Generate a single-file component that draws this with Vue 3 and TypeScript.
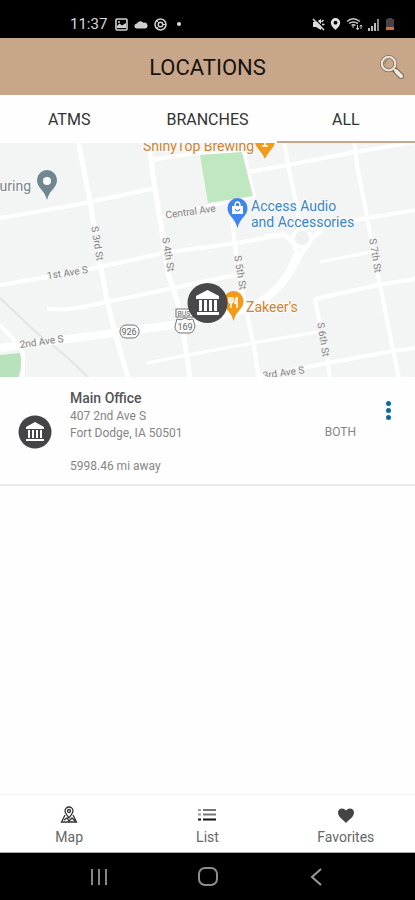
<script setup lang="ts">
import { ref } from 'vue'

interface Street {
  d: string
  width: number
}

interface StreetLabel {
  text: string
  x: number
  y: number
  angle: number
}

const tabs: string[] = ['ATMS', 'BRANCHES', 'ALL']
const activeTab = ref('ALL')

const streets: Street[] = [
  { d: 'M78 140L90 202L100 263L107 300L115 333L128 378', width: 5 },
  { d: 'M0 218C35 212 60 208 90 202L155 188', width: 4 },
  { d: 'M148 140L155 188L162 232L168 273L178 303L185 343L190 378', width: 5 },
  { d: 'M150 160L197 153L243 150', width: 4 },
  { d: 'M243 150L254 197', width: 4 },
  { d: 'M248 172L288 165L355 152L415 142', width: 4 },
  { d: 'M284 140L288 165L295 198L301 230', width: 4 },
  { d: 'M354 140L357 165L367 217L378 275L387 320L399 378', width: 4 },
  { d: 'M304 229L367 218L415 210', width: 4 },
  { d: 'M160 217L208 206L254 197', width: 3 },
  { d: 'M230 205L235 245L242 290L253 342L259 378', width: 4 },
  { d: 'M0 285L47 277L100 267L163 253L237 243L270 237', width: 4 },
  { d: 'M47 309C75 311 90 305 107 302L173 288L240 274', width: 4 },
  { d: 'M147 363L188 355L253 343L317 332', width: 3 },
  { d: 'M320 262L371 252', width: 3 },
  { d: 'M330 378L328 363L320 325L315 299L378 285L415 279', width: 4 },
  { d: 'M260 376L328 363L393 351L415 348', width: 4 },
  { d: 'M0 325L17 343Q23 350 23 358V378', width: 4 },
]

const streetLabels: StreetLabel[] = [
  { text: 'S 3rd St', x: 94, y: 244, angle: 81 },
  { text: 'S 4th St', x: 165, y: 255, angle: 81 },
  { text: 'S 5th St', x: 237, y: 273, angle: 81 },
  { text: 'S 7th St', x: 372, y: 256, angle: 81 },
  { text: 'S 6th St', x: 320, y: 340, angle: 81 },
  { text: 'Central Ave', x: 191, y: 215, angle: -8 },
  { text: '1st Ave S', x: 68, y: 276, angle: -9 },
  { text: '2nd Ave S', x: 42, y: 345, angle: -8 },
  { text: '3rd Ave S', x: 284, y: 376, angle: -8 },
]
</script>

<template>
  <div class="screen">
    <div class="status">
      <div class="status-group">
        <span class="clock">11:37</span>
        <svg width="13" height="13" viewBox="0 0 13 13"><rect x="1" y="1" width="11" height="11" rx="1" fill="none" stroke="#d0d0d0" stroke-width="1.6" /><path d="M2 10V8l2.500-2.500L7 7.500 11 5v5z" fill="#d0d0d0" /><circle cx="4" cy="4" r="1" fill="#d0d0d0" /></svg>
        <svg width="14" height="13" viewBox="0 0 14 13"><path d="M3 10.500a2.500 2.500 0 0 1 0-5A3.700 3.700 0 0 1 9.500 4.800 3 3 0 0 1 11.500 10.500z" fill="#d0d0d0" /></svg>
        <svg width="13" height="13" viewBox="0 0 13 13" fill="none" stroke="#d0d0d0"><circle cx="6.500" cy="6.500" r="5.500" stroke-width="1.500" /><circle cx="6.500" cy="6.500" r="2.300" stroke-width="1.500" /><path d="M8.800 6.500h3M4.500 8.500l-2 2M4.500 4.500l-2-2" /></svg>
        <span class="dot"></span>
      </div>
      <div class="status-group right">
        <svg width="13" height="13" viewBox="0 0 13 13"><path d="M1 4h3l5-3v11L4 9H1z" fill="#ddd" /><path d="M2 0l11 11" stroke="#000" stroke-width="1.200" /><path d="M1 1l11 11M9.500 4l2-2M10 6.500h2.500" stroke="#ddd" stroke-width="1.500" /></svg>
        <svg width="11" height="14" viewBox="0 0 11 14"><path fill-rule="evenodd" d="M5.500 1A4.700 4.700 0 0 0 .8 5.700C.8 9 5.500 13 5.500 13s4.700-4 4.700-7.300A4.700 4.700 0 0 0 5.500 1zm0 2.800a1.900 1.900 0 1 1 0 3.800 1.900 1.900 0 0 1 0-3.800z" fill="#e2e2e2" /></svg>
        <svg width="17" height="14" viewBox="0 0 17 14" fill="none" stroke="#c8c8c8" stroke-width="1.500"><path d="M1 4.500Q7 -1 14 4.500M3 6.500q4-3 9 0M5.500 8.500q2-1.500 4 0" /><path d="M7 11V8M11.500 8v4.500M10 11l1.500 1.800L13 11M15 12V8M13.700 9.500L15 8l1.300 1.500" stroke-width="1" /></svg>
        <svg width="12" height="13" viewBox="0 0 12 13" fill="#bbb"><path d="M0 10h2v3H0zM3 8h2v5H3zM6 5h2v8H6z" /><path d="M9 1h2v12H9z" fill="#888" /></svg>
        <svg width="10" height="14" viewBox="0 0 10 14"><path d="M3 1h4v1h2v11H1V2h2z" fill="#484344" /><path d="M1 10h8v3H1z" fill="#d56d3c" /></svg>
      </div>
    </div>

    <header class="header">
      <h1>LOCATIONS</h1>
      <button class="search" type="button" aria-label="Search">
        <svg width="25" height="25" viewBox="0 0 26 26" fill="none" stroke-linecap="round">
          <circle cx="10" cy="10" r="7" stroke="#75685c" stroke-width="4" />
          <path d="M16 16l7 7" stroke="#75685c" stroke-width="6" />
          <circle cx="10" cy="10" r="7" stroke="#e9dccd" stroke-width="2.500" />
          <path d="M15 15l2 2" stroke="#e9dccd" stroke-width="2" />
          <path d="M18 18l5 5" stroke="#f3e9dd" stroke-width="4" />
          <path d="M6 10q0-3 3-4" stroke="#8a7a6b" stroke-width="1" />
        </svg>
      </button>
    </header>

    <nav class="tabs">
      <button v-for="tab in tabs" :key="tab" type="button" class="tab" :class="{ active: tab === activeTab }" @click="activeTab = tab">{{ tab }}</button>
    </nav>

    <svg class="map" viewBox="0 143 415 234" preserveAspectRatio="xMidYMid slice">
      <rect y="143" width="415" height="234" fill="#f3f4f4" />
      <path d="M0 298L37 333L67 357L88 377" fill="none" stroke="#e3e4e4" stroke-width="2" />
      <path d="M0 355L20 353Q23 366 18 378H0z" fill="#b8e2bb" />
      <g fill="none" stroke="#fff" stroke-linejoin="round">
        <path v-for="street in streets" :key="street.d" :d="street.d" :stroke-width="street.width" />
        <path d="M0 348L113 333L173 325L235 313Q263 305 280 285Q292 271 297 255" stroke-width="8" />
        <path d="M264 237L284 235Q298 242 297 260M309 244Q300 252 297 264M310 240L322 230" stroke-width="5" />
        <circle cx="302" cy="238" r="9" stroke-width="4" />
      </g>
      <circle cx="302" cy="238" r="7" fill="#eef0f1" />
      <path d="M200 155L242 152L253 196L208 203z" fill="#bfe7c0" />
      <g class="street-names">
        <text v-for="label in streetLabels" :key="label.text" :x="label.x" :y="label.y" :transform="`rotate(${label.angle} ${label.x} ${label.y})`">{{ label.text }}</text>
      </g>

      <g class="shields">
        <rect x="120" y="325" width="19" height="13" rx="6" />
        <text x="129" y="335">926</text>
        <rect x="176" y="309" width="17" height="8" />
        <text x="184" y="316" class="small">BUS</text>
        <path d="M177 319q4 2 8-1 4 3 8 1l2 7q-1 6-5 7h-10q-5-1-5-7z" />
        <text x="185" y="330">169</text>
      </g>

      <g class="places">
        <text x="31" y="191" text-anchor="end" fill="#78868d">uring</text>
        <text x="143" y="151" fill="#ce8432">ShinyTop Brewing</text>
        <text x="251" y="211" fill="#3986c7">Access Audio</text>
        <text x="251" y="227" fill="#3986c7">and Accessories</text>
        <text x="246" y="312" fill="#ce8432">Zakeer's</text>
      </g>

      <path d="M47 170a10 10 0 0 0-10 10c0 8 7 9 10 20 3-11 10-12 10-20a10 10 0 0 0-10-10z" fill="#708690" />
      <circle cx="47" cy="181" r="4" fill="#fff" />
      <path d="M255 140h20c1 7-6 10-10 19-4-9-11-12-10-19z" fill="#f39a18" />
      <path d="M262 146h6M265 141v5" stroke="#fff" stroke-width="1.500" />
      <path d="M237.500 198a10 10 0 0 0-10 10c0 8 7 9 10 20 3-11 10-12 10-20a10 10 0 0 0-10-10z" fill="#3f85ed" />
      <path d="M232 206h11v8h-11z" fill="#fff" />
      <path d="M235 206q0-4 2.500-4t2.500 4" fill="none" stroke="#fff" stroke-width="1.500" />
      <path d="M235 209q2.500 4 5 0" fill="none" stroke="#3f85ed" stroke-width="1.200" />
      <path d="M233.500 291a10 10 0 0 0-10 10c0 8 7 9 10 20 3-11 10-12 10-20a10 10 0 0 0-10-10z" fill="#f39a18" />
      <path d="M229 297v4q0 2 2 2t2-2v-4M231 297v11M237 297v11M237 297q-2 2-2 6h2" fill="none" stroke="#fff" stroke-width="1.500" />
      <circle cx="207.500" cy="303" r="20" fill="#48484a" />
      <path d="M196 299v-3l11.500-6 11.500 6v3zM199 300h3v11h-3zM204 300h3v11h-3zM209 300h3v11h-3zM214 300h3v11h-3zM197 312h22v3h-22z" fill="#fff" />
    </svg>

    <main class="list">
      <article class="location">
        <svg class="bank" width="34" height="34" viewBox="0 0 34 34">
          <circle cx="17" cy="17" r="16.500" fill="#444446" />
          <path d="M8 14v-2l9-5 9 5v2zM10 15h2v8h-2zM14 15h2v8h-2zM18 15h2v8h-2zM22 15h2v8h-2zM8 24h18v2H8z" fill="#fff" />
        </svg>
        <div class="details">
          <h2>Main Office</h2>
          <p>407 2nd Ave S</p>
          <p>Fort Dodge, IA 50501</p>
          <p class="distance">5998.46 mi away</p>
        </div>
        <span class="kind">BOTH</span>
        <button class="more" type="button" aria-label="More options"><i></i><i></i><i></i></button>
      </article>
    </main>

    <nav class="bottom">
      <button type="button">
        <svg width="18" height="18" viewBox="0 0 18 18" fill="none" stroke="#333" stroke-width="1.300"><path d="M9 12C7 9 5 7.500 5 5a4 4 0 0 1 8 0c0 2.500-2 4-4 7z" /><circle cx="9" cy="5" r="1.500" /><path d="M5 9L1.500 16h15L13 9M4 14l3-2 2 3 3-3 3 3" /></svg>
        <span>Map</span>
      </button>
      <button type="button">
        <svg width="18" height="18" viewBox="0 0 18 18"><path d="M0 4h3M0 8.500h3" stroke="#999" stroke-width="2" /><path d="M5 4h13M5 8.500h13" stroke="#777" stroke-width="1.800" /><path d="M0 13.500h3M5 13.500h13" stroke="#111" stroke-width="2" /></svg>
        <span>List</span>
      </button>
      <button type="button">
        <svg width="18" height="18" viewBox="0 0 18 18"><path d="M9 17C6 13.500 1 11 1 6.500 1 2 6.500 1 9 4.500 11.500 1 17 2 17 6.500 17 11 12 13.500 9 17z" fill="#444" /></svg>
        <span>Favorites</span>
      </button>
    </nav>

    <div class="system">
      <button type="button" aria-label="Recent apps"><svg width="18" height="18" viewBox="0 0 18 18" stroke="#858585" stroke-width="2"><path d="M2 1v16M9 1v16M16 1v16" /></svg></button>
      <button type="button" aria-label="Home"><svg width="20" height="20" viewBox="0 0 20 20" fill="none" stroke="#8e8e8e" stroke-width="2"><rect x="1" y="1" width="18" height="17" rx="6" /></svg></button>
      <button type="button" aria-label="Back"><svg width="18" height="18" viewBox="0 0 18 18" fill="none" stroke="#9a9a9a" stroke-width="2"><path d="M13 1L4 9l9 8" /></svg></button>
    </div>
  </div>
</template>

<style>
body {
  margin: 0;
  background: #fff;
}
</style>

<style scoped>
.screen {
  display: flex;
  flex-direction: column;
  min-height: 100vh;
  background: #fefefe;
  font-family: Roboto, sans-serif;
  color: #333;
}
button {
  padding: 0;
  border: 0;
  background: none;
  font: inherit;
  color: inherit;
}
svg {
  display: block;
  flex-shrink: 0;
}
.status {
  display: flex;
  justify-content: space-between;
  box-sizing: border-box;
  height: 38px;
  padding: 12px 20px 2px 70px;
  background: #000;
}
.status-group {
  display: flex;
  align-items: center;
  gap: 6px;
}
.status-group.right {
  gap: 5px;
}
.clock {
  margin-right: 2px;
  font-size: 15px;
  line-height: 24px;
  color: #d8d8d8;
}
.dot {
  width: 4px;
  height: 4px;
  margin-left: 4px;
  border-radius: 50%;
  background: #ddd;
}
.header {
  display: grid;
  grid-template-columns: 1fr auto 1fr;
  align-items: center;
  height: 57px;
  background: #c8a68a;
}
h1 {
  grid-column: 2;
  margin: 0;
  padding-top: 2px;
  font-size: 22px;
  font-weight: 400;
  line-height: 28px;
  color: #161310;
}
.search {
  justify-self: end;
  margin-right: 11px;
}
.tabs {
  display: grid;
  grid-template-columns: repeat(3, 1fr);
  height: 48px;
}
.tab {
  padding-top: 2px;
  border-bottom: 2px solid transparent;
  font-size: 16px;
}
.tab.active {
  border-bottom-color: #cba68d;
}
.map {
  width: 100%;
  height: 234px;
  font-family: Roboto, sans-serif;
}
.street-names text {
  font-size: 10px;
  text-anchor: middle;
  fill: #858585;
  stroke: #f5f5f5;
  stroke-width: 2px;
  paint-order: stroke;
}
.shields rect,
.shields path {
  fill: #fafafa;
  stroke: #777;
}
.shields text {
  font-size: 9px;
  text-anchor: middle;
  fill: #666;
}
.shields .small {
  font-size: 7px;
}
.places text {
  font-size: 14px;
  stroke: #fafafa;
  stroke-width: 2px;
  paint-order: stroke;
}
.list {
  flex: 1;
}
.location {
  display: flex;
  padding: 12px 24px 9px 18px;
  border-bottom: 2px solid #e8e8e8;
}
.bank {
  align-self: center;
}
.details {
  flex: 1;
  padding-left: 18px;
}
h2 {
  margin: 0;
  font-size: 14px;
  font-weight: 500;
  line-height: 18px;
  color: #555;
}
p {
  margin: 0;
  font-size: 12px;
  line-height: 17px;
  color: #858585;
}
h2 + p {
  margin-top: 1px;
}
.distance {
  margin-top: 16px;
}
.kind {
  align-self: center;
  font-size: 12px;
  line-height: 17px;
  color: #858585;
}
.more {
  display: flex;
  flex-direction: column;
  align-self: flex-start;
  gap: 2px;
  margin: 12px 0 0 30px;
}
.more i {
  width: 5px;
  height: 5px;
  border-radius: 50%;
  background: #0d6a9c;
}
.bottom {
  display: grid;
  grid-template-columns: repeat(3, 1fr);
  box-sizing: border-box;
  height: 59px;
  border-top: 1px solid #f3f3f3;
  border-bottom: 1px solid #aaa;
  background: #fff;
}
.bottom button {
  display: flex;
  flex-direction: column;
  align-items: center;
  justify-content: center;
  gap: 4px;
  padding-top: 5px;
  font-size: 14px;
  line-height: 18px;
  color: #666;
}
.system {
  display: flex;
  align-items: center;
  justify-content: center;
  gap: 90px;
  height: 47px;
  background: #000;
}
</style>
